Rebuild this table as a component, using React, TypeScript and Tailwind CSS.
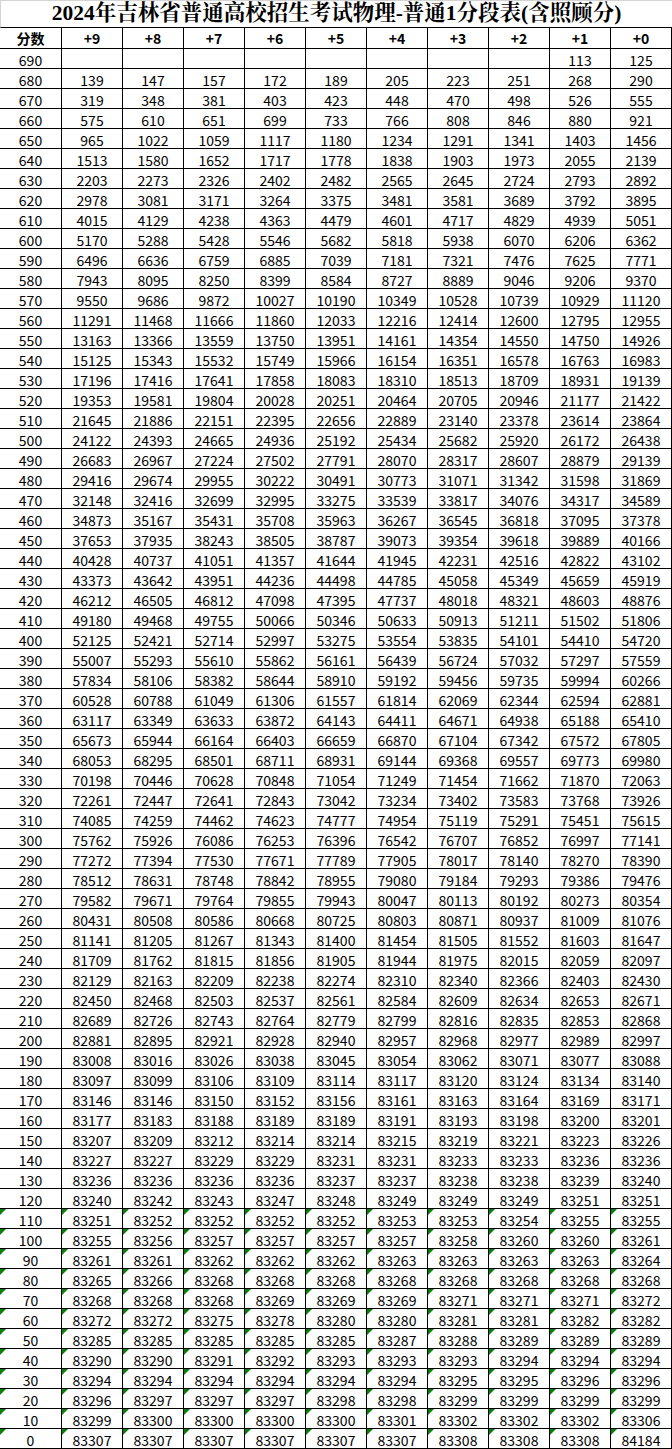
const RAW = `690 - - - - - - - - 113 125
680 139 147 157 172 189 205 223 251 268 290
670 319 348 381 403 423 448 470 498 526 555
660 575 610 651 699 733 766 808 846 880 921
650 965 1022 1059 1117 1180 1234 1291 1341 1403 1456
640 1513 1580 1652 1717 1778 1838 1903 1973 2055 2139
630 2203 2273 2326 2402 2482 2565 2645 2724 2793 2892
620 2978 3081 3171 3264 3375 3481 3581 3689 3792 3895
610 4015 4129 4238 4363 4479 4601 4717 4829 4939 5051
600 5170 5288 5428 5546 5682 5818 5938 6070 6206 6362
590 6496 6636 6759 6885 7039 7181 7321 7476 7625 7771
580 7943 8095 8250 8399 8584 8727 8889 9046 9206 9370
570 9550 9686 9872 10027 10190 10349 10528 10739 10929 11120
560 11291 11468 11666 11860 12033 12216 12414 12600 12795 12955
550 13163 13366 13559 13750 13951 14161 14354 14550 14750 14926
540 15125 15343 15532 15749 15966 16154 16351 16578 16763 16983
530 17196 17416 17641 17858 18083 18310 18513 18709 18931 19139
520 19353 19581 19804 20028 20251 20464 20705 20946 21177 21422
510 21645 21886 22151 22395 22656 22889 23140 23378 23614 23864
500 24122 24393 24665 24936 25192 25434 25682 25920 26172 26438
490 26683 26967 27224 27502 27791 28070 28317 28607 28879 29139
480 29416 29674 29955 30222 30491 30773 31071 31342 31598 31869
470 32148 32416 32699 32995 33275 33539 33817 34076 34317 34589
460 34873 35167 35431 35708 35963 36267 36545 36818 37095 37378
450 37653 37935 38243 38505 38787 39073 39354 39618 39889 40166
440 40428 40737 41051 41357 41644 41945 42231 42516 42822 43102
430 43373 43642 43951 44236 44498 44785 45058 45349 45659 45919
420 46212 46505 46812 47098 47395 47737 48018 48321 48603 48876
410 49180 49468 49755 50066 50346 50633 50913 51211 51502 51806
400 52125 52421 52714 52997 53275 53554 53835 54101 54410 54720
390 55007 55293 55610 55862 56161 56439 56724 57032 57297 57559
380 57834 58106 58382 58644 58910 59192 59456 59735 59994 60266
370 60528 60788 61049 61306 61557 61814 62069 62344 62594 62881
360 63117 63349 63633 63872 64143 64411 64671 64938 65188 65410
350 65673 65944 66164 66403 66659 66870 67104 67342 67572 67805
340 68053 68295 68501 68711 68931 69144 69368 69557 69773 69980
330 70198 70446 70628 70848 71054 71249 71454 71662 71870 72063
320 72261 72447 72641 72843 73042 73234 73402 73583 73768 73926
310 74085 74259 74462 74623 74777 74954 75119 75291 75451 75615
300 75762 75926 76086 76253 76396 76542 76707 76852 76997 77141
290 77272 77394 77530 77671 77789 77905 78017 78140 78270 78390
280 78512 78631 78748 78842 78955 79080 79184 79293 79386 79476
270 79582 79671 79764 79855 79943 80047 80113 80192 80273 80354
260 80431 80508 80586 80668 80725 80803 80871 80937 81009 81076
250 81141 81205 81267 81343 81400 81454 81505 81552 81603 81647
240 81709 81762 81815 81856 81905 81944 81975 82015 82059 82097
230 82129 82163 82209 82238 82274 82310 82340 82366 82403 82430
220 82450 82468 82503 82537 82561 82584 82609 82634 82653 82671
210 82689 82726 82743 82764 82779 82799 82816 82835 82853 82868
200 82881 82895 82921 82928 82940 82957 82968 82977 82989 82997
190 83008 83016 83026 83038 83045 83054 83062 83071 83077 83088
180 83097 83099 83106 83109 83114 83117 83120 83124 83134 83140
170 83146 83146 83150 83152 83156 83161 83163 83164 83169 83171
160 83177 83183 83188 83189 83189 83191 83193 83198 83200 83201
150 83207 83209 83212 83214 83214 83215 83219 83221 83223 83226
140 83227 83227 83229 83229 83231 83231 83233 83233 83236 83236
130 83236 83236 83236 83236 83237 83237 83238 83238 83239 83240
120 83240 83242 83243 83247 83248 83249 83249 83249 83251 83251
110 83251 83252 83252 83252 83252 83253 83253 83254 83255 83255
100 83255 83256 83257 83257 83257 83257 83258 83260 83260 83261
90 83261 83261 83262 83262 83262 83263 83263 83263 83263 83264
80 83265 83266 83268 83268 83268 83268 83268 83268 83268 83268
70 83268 83268 83268 83269 83269 83269 83271 83271 83271 83272
60 83272 83272 83275 83278 83280 83280 83281 83281 83282 83282
50 83285 83285 83285 83285 83285 83287 83288 83289 83289 83289
40 83290 83290 83291 83292 83293 83293 83293 83294 83294 83294
30 83294 83294 83294 83294 83294 83294 83295 83295 83296 83296
20 83296 83297 83297 83297 83298 83298 83299 83299 83299 83299
10 83299 83300 83300 83300 83300 83301 83302 83302 83302 83306
0 83307 83307 83307 83307 83307 83307 83308 83308 83308 84184`;

const ROWS = RAW.split("\n").map((line) =>
  line.split(" ").map((v) => (v === "-" ? "" : v))
);

const HEADERS = ["分数", "+9", "+8", "+7", "+6", "+5", "+4", "+3", "+2", "+1", "+0"];

const GRID = "grid grid-cols-[62px_repeat(10,61px)]";
const NUM_FONT = "font-['Noto_Sans_CJK_SC','Liberation_Sans',sans-serif]";

// excel "number stored as text" marker
const Flag = () => (
  <span className="absolute left-0 top-0 h-0 w-0 border-r-[6px] border-t-[6px] border-r-transparent border-t-[#0a7d0a]" />
);

export default function App() {
  return (
    <div className="w-[672px] bg-white text-black">
      <div className="flex h-[28px] items-center justify-center border-b border-l border-t border-b-black border-l-[#d4d4d4] border-t-[#d4d4d4] font-['Liberation_Serif','Noto_Serif_CJK_SC','Noto_Sans_CJK_SC',serif] text-[21.5px] font-bold leading-none">
        2024年吉林省普通高校招生考试物理-普通1分段表(含照顾分)
      </div>

      <div className={`${GRID} h-[21px]`}>
        {HEADERS.map((h) => (
          <div
            className={`flex items-center justify-center border-b border-r border-black ${NUM_FONT} text-[14px] font-bold leading-none`}
            key={h}
          >
            {h}
          </div>
        ))}
      </div>

      {ROWS.map((row) => {
        const flagged = Number(row[0]) <= 110;
        return (
          <div className={`${GRID} h-5`} key={row[0]}>
            {row.map((v, i) => (
              <div
                className={`relative flex items-center justify-center border-b border-r border-black pt-[2px] ${NUM_FONT} text-[14px] leading-none`}
                key={i}
              >
                {flagged && <Flag />}
                {v}
              </div>
            ))}
          </div>
        );
      })}
    </div>
  );
}
